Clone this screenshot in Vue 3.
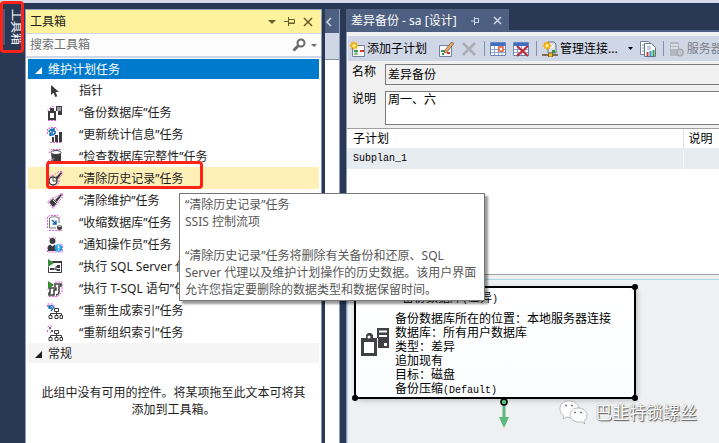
<script setup>
import { ref } from 'vue'

const dark = '#3b3b3f'
const halo = 'fill="none" stroke="#e45be0" stroke-width="1" stroke-dasharray="2 1"'
const tree = `<path d="M7.500 5.500h4v3h-4zM9.500 8.500v4M3.500 12.500v-2h11v2M2 12.500h3v3H2zM8 12.500h3v3H8zM13 12.500h2.500v3H13z" fill="none" stroke="${dark}"/>`

const tasks = [
  { label: '指针', icon: `<path d="M4 2v10l2.500-2.300L8.300 14l2-.8-1.800-4.100H12z" fill="${dark}"/>` },
  { label: '“备份数据库”任务', icon: `<path d="M.5 6 4 2l4-1M1 15.500h9" ${halo}/><path d="M9 1h6v9h-4V6H9z" fill="${dark}"/><path d="M10 3h4M10 5h4" stroke="#fff"/><path d="M2 7h6v7H2zM4 6.500V4h2v2.500" fill="#fff" stroke="${dark}" stroke-width="2"/>` },
  { label: '“更新统计信息”任务', icon: `<path d="M.5 7V2L4 .5h5L11 4M3 15.500h12" ${halo}/><path d="M2 5a3 3 0 0 1 5-2M8 4a3 3 0 0 1-5 3M7 1v3H4M3 9V6h3" fill="none" stroke="#1269b5" stroke-width="1.500"/><path d="M5 10h2v5H5zM8 8h3v7H8zM12 5h3v10h-3z" fill="${dark}"/>` },
  { label: '“检查数据库完整性”任务', icon: `<path d="M2 4 4 .5h11M.5 13 3 10" ${halo}/><ellipse cx="9" cy="3.500" rx="5" ry="2" fill="#fff" stroke="${dark}"/><path d="M4 4c2 2 8 2 10 0v9c-2 2-7 2-9 0z" fill="${dark}"/><path d="m1 12 2 2 4-5" fill="none" stroke="#777" stroke-width="2"/>` },
  { label: '“清除历史记录”任务', active: true, icon: `<path d="M.5 8 3 5l4-1 5-3.500h3V4l-3 3v5l-4 3.500H3L.500 12z" ${halo}/><path d="m8 7 6-6 1 1-5 7z" fill="${dark}"/><circle cx="6" cy="10" r="4" fill="#fff" stroke="${dark}" stroke-width="1.500"/><path d="M6 7v3h3" fill="none" stroke="${dark}"/>` },
  { label: '“清除维护”任务', icon: `<path d="M.5 9 5 5l4-1 5-3.500h1.500V4l-4 5L6 15.500z" ${halo}/><path d="m8 7 6-6 1 1-5 7z" fill="${dark}"/><path d="m2 9 4-3.500 4.500 4.500L6 14z" fill="${dark}"/><path d="M6 7l4 4" stroke="#fff"/>` },
  { label: '“收缩数据库”任务', icon: `<path d="M.5 13V2L3 .5h8L13.500 3M2 15.500h13" ${halo}/><path d="M2.500 3v10H9M2.500 3c1-1.500 8-1.500 9.500 0v5" fill="none" stroke="#777"/><path d="m5 5 4 4M9 5.500V9H5.500" fill="none" stroke="#1269b5" stroke-width="1.500"/><ellipse cx="12.500" cy="12.500" rx="2.500" ry="2.500" fill="${dark}"/><ellipse cx="12.500" cy="11.200" rx="1.500" ry=".6" fill="#fff"/>` },
  { label: '“通知操作员”任务', icon: `<path d="M2 1h7M.5 10v5h15V8l-3-2" ${halo}/><circle cx="5.500" cy="4" r="3" fill="${dark}"/><path d="M1 14V9l2-1.500 2.500 2L8 7.500 10 14z" fill="${dark}"/><circle cx="11.500" cy="11" r="3.800" fill="#28a4e8"/><path d="M11.500 8.500v3M11.500 12.500v1" stroke="#fff" stroke-width="1.500"/>` },
  { label: '“执行 SQL Server 代理作业”任务', icon: `<path d="M5.500 2.500h9v11h-13V8" fill="none" stroke="${dark}"/><path d="M5 3h10" stroke="${dark}" stroke-width="2"/><path d="m1 0 6 4-6 4z" fill="#388a34"/><path d="M3 9h4v2H3zM10 6h3v3h-3zM10 10h3v2h-3z" fill="${dark}"/><path d="M7 10h2V7.500h1M9 10v1h1" fill="none" stroke="${dark}"/>` },
  { label: '“执行 T-SQL 语句”任务', icon: `<path d="M.5 9 3 6M8 1h7v10l-4 4.500H2" ${halo}/><path d="M7 3h7v2h-2v6c0 2-2 3-3 3M8 4v2" fill="none" stroke="${dark}" stroke-width="1.500"/><path d="M3 7h6v2H7v5H2v-2h1z" fill="#fff" stroke="${dark}" stroke-width="1.500"/><path d="m1 0 6 4-6 4z" fill="#388a34"/>` },
  { label: '“重新生成索引”任务', icon: `${tree}<path d="M.5 4V1h5l2 2v2" ${halo}/><path d="M2 2v3h3M2.500 4.500C4 1 7.500 3 6 5.500L4 8" fill="none" stroke="#1269b5" stroke-width="1.300"/>` },
  { label: '“重新组织索引”任务', icon: `${tree}<path d="M.5 2 3 .5l2 1M.5 5v3M3 8l3-3M2 4l3-1" ${halo}/><path d="M2 2h2v2H2zM4 5h2v2H4z" fill="#666"/>` },
]

const star = '<path d="m5 0 1 2 2-1-.5 2.300L10 5l-2.300.7L8 8 6 7 5 10 4 7 2 8l.5-2.300L0 5l2.300-1.500L2 1l2 1z" fill="#f5a800"/><circle cx="5" cy="4.800" r="1.700" fill="#fff79a"/>'
const grid = '<path d="M.5 1.500h15v13H.5z" fill="#fff" stroke="#6a86b8"/><path d="M1 2h14v3H1z" fill="#3e6fc4"/><path d="M1 8.500h14M1 11.500h14M4.500 5v9M8.500 5v9M12 5v9" stroke="#8ba4cf"/>'
const icons = {
  add: `<path d="M3.500 4.500h12v11h-12z" fill="#f8f8fb" stroke="#7080a0"/><path d="M5 9h4v2H5z" fill="#35984a"/><path d="M5 13h4M7 10v3" stroke="#35984a"/><path d="M11 9h4v2h-4z" fill="#d53a32"/>${star}`,
  edit: '<path d="M1.500 4.500h12v11h-12z" fill="#f8f8fb" stroke="#7080a0"/><path d="M3 9h4v2H3zM4 12h2v2H4z" fill="#35984a"/><path d="M9 11h3v2H9z" fill="#d53a32"/><path d="m7 9 6.500-8L16 2.500 9 11l-3 1z" fill="#e3a768" stroke="#725132" stroke-width=".7"/>',
  remove: '<path d="m2 2 12 12M14 2 2 14" stroke="#a9adb5" stroke-width="2.500"/>',
  schedule: `${grid}<path d="M9 6h4v4H9z" fill="#fff" stroke="#ed5b2b" stroke-width="1.500"/>`,
  unschedule: `${grid}<path d="m4 5 11 10M15 5 4 15" stroke="#c42832" stroke-width="2"/>`,
  connect: `<path d="M6 1h6l2 2v9H6z" fill="#d9dee3" stroke="#6d7783"/><path d="M8 4h4M8 6h4" stroke="#fff"/><path d="M10 9h3v3h-3z" fill="#2e9a45"/><path d="M0 14h16" stroke="#5b4a22" stroke-width="1.500"/><path d="M6.500 12h4v4h-4z" fill="#f4bd28" stroke="#6f5615" stroke-width=".7"/>${star}`,
  report: '<path d="M.5.5h8l2 2v11H.5z" fill="#fff" stroke="#7080a0"/><path d="M4.500 2.500h7l4 4v9h-11z" fill="#fff" stroke="#60718f"/><path d="M2 4h2M2 7h2M2 10h2M7 6h4M7 8h4" stroke="#7f9fca"/><path d="M6.500 11h2v4h-2z" fill="#d53a32"/><path d="M9.500 10h2v5h-2z" fill="#318ed8"/><path d="M12.500 9h2v6h-2z" fill="#35984a"/>',
  server: '<path d="M1 1h9v14H1z" fill="#b3b7bf"/><path d="M2 4h7M2 7h7" stroke="#e4e8ef" stroke-width="1.500"/><circle cx="11" cy="11.500" r="4" fill="#a7abb2"/><circle cx="11" cy="11.500" r="1.500" fill="none" stroke="#e4e8ef"/>',
}

const planName = ref('差异备份')
const planNote = ref('周一、六')
const query = ref('')
</script>

<template>
  <div class="shell">
    <nav class="rail">
      <button class="rail-tab" type="button">工具箱</button>
      <span class="mark mark-rail"></span>
    </nav>

    <aside class="toolbox">
      <header class="tool-title">
        <h2>工具箱</h2>
        <button type="button" aria-label="窗口位置"><svg width="8" height="4"><path d="M0 0h8L4 4z" fill="#6b5a2a" /></svg></button>
        <button type="button" aria-label="自动隐藏"><svg width="11" height="9"><path d="M0 4.500h4M4.500 0v9M5 2.500h5.500v4H5M5 6h5" fill="none" stroke="#6b5a2a" /></svg></button>
        <button type="button" aria-label="关闭"><svg width="10" height="10"><path d="m1 1 8 8M9 1 1 9" stroke="#6b5a2a" stroke-width="1.500" /></svg></button>
      </header>
      <div class="search">
        <input v-model="query" type="text" aria-label="搜索工具箱" placeholder="搜索工具箱">
        <button type="button" aria-label="搜索"><svg width="14" height="14"><circle cx="9" cy="5" r="3.500" fill="none" stroke="#6a6a6a" stroke-width="2" /><path d="m6.500 7.500-5 5" stroke="#6a6a6a" stroke-width="3" /></svg></button>
        <button type="button" aria-label="搜索选项"><svg width="6" height="3"><path d="M0 0h6L3 3z" fill="#6a6a6a" /></svg></button>
      </div>
      <div class="groups">
        <button class="group selected" type="button"><svg width="7" height="7"><path d="M7 0v7H0z" fill="currentColor" /></svg>维护计划任务</button>
        <ul>
          <li v-for="task in tasks" :key="task.label">
            <button class="task" :class="{ active: task.active }" type="button">
              <svg width="16" height="16" viewBox="0 0 16 16" v-html="task.icon"></svg>{{ task.label }}
            </button>
            <span v-if="task.active" class="mark mark-task"></span>
          </li>
        </ul>
        <button class="group" type="button"><svg width="7" height="7"><path d="M7 0v7H0z" fill="currentColor" /></svg>常规</button>
        <p class="empty">此组中没有可用的控件。将某项拖至此文本可将其添加到工具箱。</p>
      </div>
    </aside>

    <div class="behind">
      <div class="behind-tab"><svg width="7" height="10"><path d="M6 1 2 5l4 4" fill="none" stroke="#ccd5e6" stroke-width="1.500" /></svg></div>
      <div class="behind-bar"></div>
      <div class="behind-page"></div>
    </div>

    <main class="document">
      <div class="tabs">
        <div class="tab">
          <span>差异备份 - sa [设计]</span>
          <button type="button" aria-label="固定"><svg width="8" height="8"><path d="M0 4h3M3.500 0v8M4 1.500h3.500v4H4" fill="none" stroke="#ccd5e6" /></svg></button>
          <button type="button" aria-label="关闭标签页"><svg width="9" height="9"><path d="m1 1 7 7M8 1 1 8" stroke="#ccd5e6" stroke-width="1.500" /></svg></button>
        </div>
      </div>
      <div class="editor">
        <div class="toolbar">
          <button type="button"><svg width="16" height="16" v-html="icons.add"></svg>添加子计划</button>
          <button class="spaced" type="button" aria-label="编辑子计划"><svg width="16" height="16" v-html="icons.edit"></svg></button>
          <button type="button" aria-label="删除子计划" disabled><svg width="16" height="16" v-html="icons.remove"></svg></button>
          <i class="sep"></i>
          <button type="button" aria-label="计划"><svg width="16" height="16" v-html="icons.schedule"></svg></button>
          <button type="button" aria-label="删除计划"><svg width="16" height="16" v-html="icons.unschedule"></svg></button>
          <i class="sep"></i>
          <button type="button"><svg width="16" height="16" v-html="icons.connect"></svg>管理连接...<svg class="caret" width="5" height="3"><path d="M0 0h5L2.500 3z" /></svg></button>
          <button type="button" aria-label="报告和日志记录"><svg width="16" height="16" v-html="icons.report"></svg></button>
          <i class="sep"></i>
          <button type="button" disabled><svg width="16" height="16" v-html="icons.server"></svg>服务器</button>
        </div>
        <form class="fields" @submit.prevent>
          <label for="plan-name">名称</label>
          <input id="plan-name" v-model="planName" type="text" readonly>
          <label for="plan-note">说明</label>
          <textarea id="plan-note" v-model="planNote"></textarea>
        </form>
        <div class="subplans">
          <table>
            <thead><tr><th>子计划</th><th class="note">说明</th></tr></thead>
            <tbody><tr><td><span class="mono">Subplan_1</span></td><td></td></tr></tbody>
          </table>
        </div>
        <div class="canvas">
          <article class="node">
            <i class="dot tl"></i><i class="dot tr"></i><i class="dot bl"></i><i class="dot br"></i>
            <h3>备份数据库<span class="mono">(</span>差异<span class="mono">)</span></h3>
            <div class="node-body">
              <svg width="28" height="28" viewBox="0 0 28 28"><path d="M16 0h12v20H17V10h-1z" fill="#414143" /><path d="M18 3.500h8M18 8h8" stroke="#fff" stroke-width="2" /><path d="M23 15h3v3h-3z" fill="#fff" /><path d="M0 10h5V7l2-2h3l2 2v3h4v18H0z" fill="#414143" /><path d="M3 14h10v11H3z" fill="#fff" /><circle cx="8" cy="9" r="1.500" fill="#fff" /></svg>
              <p>备份数据库所在的位置：本地服务器连接<br>数据库：所有用户数据库<br>类型：差异<br>追加现有<br>目标：磁盘<br>备份压缩<span class="mono">(Default)</span></p>
            </div>
          </article>
          <svg class="flow-arrow" width="12" height="32"><path d="M6 6v18" stroke="#5dba80" stroke-width="3" /><path d="M1 20h10L6 31z" fill="#5dba80" /><circle cx="6" cy="5" r="3" fill="#5dba80" stroke="#000" stroke-width="1.500" /></svg>
          <div class="watermark">
            <svg width="29" height="26" viewBox="0 0 29 26"><g fill="#fff" stroke="#a9abad" stroke-width=".8"><path d="M10 1C4 1 1 5 1 9c0 3 1 5 4 7l-1 3 4-2c9 2 12-3 12-8 0-4-4-8-10-8z" /><path d="M19 8c-5 0-8 3-8 7s4 7 9 7l3 0 3 2-1-3c2-1 3-4 3-6 0-4-4-7-9-7z" /></g><path d="M6 5.500h2M12 5.500h2M15 12.500h2M21 12.500h2" stroke="#777" stroke-width="1.500" /></svg>
            <span>巴韭特锁螺丝</span>
          </div>
        </div>
      </div>
    </main>

    <div class="tooltip" role="tooltip">
      <p>“清除历史记录”任务<br>SSIS 控制流项</p>
      <p>“清除历史记录”任务将删除有关备份和还原、SQL Server 代理以及维护计划操作的历史数据。该用户界面允许您指定要删除的数据类型和数据保留时间。</p>
    </div>
  </div>
</template>

<style>
body {
  margin: 0;
}
</style>

<style scoped>
* {
  box-sizing: border-box;
}

.shell {
  position: relative;
  display: flex;
  min-height: 100vh;
  padding-top: 9px;
  overflow: hidden;
  background: linear-gradient(#d6dbe9 3px, #293955 3px);
  color: #1e1e1e;
  font: 12px/16px "Noto Sans", "Noto Sans CJK SC", sans-serif;
}

button,
input,
textarea {
  margin: 0;
  padding: 0;
  border: 0;
  border-radius: 0;
  background: none;
  color: inherit;
  font: inherit;
}

button {
  display: flex;
  flex: none;
  align-items: center;
  white-space: nowrap;
}

svg {
  display: block;
  flex: none;
}

h2,
h3,
p,
ul {
  margin: 0;
  padding: 0;
  font-size: 12px;
  font-weight: 400;
  list-style: none;
}

.rail {
  flex: none;
  width: 25px;
  padding-left: 2px;
}

.rail-tab {
  height: 36px;
  padding-left: 4px;
  border-left: 3px solid #465a7d;
  color: #fff;
  line-height: 14px;
  writing-mode: vertical-rl;
  text-orientation: sideways;
}

.mark {
  position: absolute;
  z-index: 3;
  border: 3px solid #fd2417;
  border-radius: 4px;
  pointer-events: none;
}

.mark-rail {
  top: 1px;
  left: 0;
  width: 24px;
  height: 52px;
}

.toolbox {
  display: flex;
  flex: none;
  flex-direction: column;
  width: 297px;
  border: 1px solid #8e9bbc;
  border-bottom: 0;
  background: #fff;
}

.tool-title {
  display: flex;
  align-items: center;
  gap: 8px;
  height: 23px;
  padding: 0 8px 0 4px;
  background: #fff29d;
}

.tool-title h2 {
  flex: 1;
}

.search {
  display: flex;
  align-items: center;
  gap: 5px;
  height: 25px;
  padding: 0 4px;
  border-top: 1px solid #cfd6e5;
  border-bottom: 2px solid #cfd6e5;
  background: #fcfcfc;
}

.search input {
  flex: 1;
  min-width: 0;
  outline: 0;
}

.search input::placeholder {
  color: #717171;
  opacity: 1;
}

.groups {
  padding: 1px 2px;
}

.group {
  gap: 6px;
  width: 100%;
  height: 20px;
  padding: 2px 0 0 7px;
  background: #f5f5f5;
}

.group.selected {
  background: #007acc;
  color: #fff;
}

li {
  position: relative;
}

.task {
  gap: 16px;
  width: 100%;
  height: 22px;
  padding: 2px 0 0 19px;
}

.task.active {
  background: #fff0b8;
}

.mark-task {
  top: -6px;
  left: 18px;
  width: 157px;
  height: 28px;
}

.empty {
  padding: 21px 8px;
  line-height: 17px;
  text-align: center;
}

.behind {
  display: flex;
  flex: none;
  flex-direction: column;
  width: 18px;
  margin-right: 6px;
  border-left: 3px solid #293955;
  border-right: 1px solid #8e9bbc;
}

.behind-tab {
  height: 24px;
  padding-top: 8px;
  background: #4d6082;
}

.behind-bar {
  height: 27px;
  border-bottom: 1px solid #8a8f99;
  background: #cfd6e5;
}

.behind-page {
  flex: 1;
  background: #fff;
}

.document {
  display: flex;
  flex: 1;
  flex-direction: column;
  min-width: 0;
}

.tabs {
  display: flex;
  border-bottom: 2px solid #4d6082;
}

.tab {
  display: flex;
  align-items: center;
  gap: 14px;
  height: 21px;
  padding: 2px 7px 0 5px;
  background: #4d6082;
  color: #fff;
}

.editor {
  display: flex;
  flex: 1;
  flex-direction: column;
  padding-top: 4px;
  border-left: 1px solid #8e9bbc;
  background: #f0f0f0;
}

.toolbar {
  display: flex;
  align-items: center;
  gap: 7px;
  height: 25px;
  margin-left: 1px;
  padding-left: 1px;
  overflow: hidden;
  background: #cfd6e5;
  color: #000;
}

.toolbar button {
  gap: 2px;
}

.toolbar .spaced {
  margin-left: 4px;
}

.toolbar .caret {
  margin-left: 8px;
}

.toolbar button:disabled {
  color: #7d8088;
}

.sep {
  flex: none;
  width: 1px;
  height: 15px;
  margin-right: -2px;
  background: #8591a8;
}

.fields {
  display: grid;
  grid-template-columns: 33px 1fr;
  gap: 6px 0;
  padding: 3px 0 3px 5px;
  color: #000;
}

.fields input,
.fields textarea {
  width: 100%;
  height: 21px;
  padding: 0 2px 2px;
  border: 1px solid #7a7a7a;
  border-right: 0;
  outline: 0;
  background: #f0f0f0;
}

.fields textarea {
  display: block;
  height: 34px;
  background: #fff;
  resize: none;
}

.subplans {
  height: 147px;
  border: 1px solid #a0a0a0;
  border-width: 1px 0;
  background: #fff;
  color: #000;
}

table {
  width: 100%;
  border-collapse: collapse;
  table-layout: fixed;
}

th,
td {
  height: 19px;
  padding: 0 0 0 6px;
  font-weight: 400;
  text-align: left;
}

td {
  height: 21px;
  padding-bottom: 3px;
  background: #e7ecf0;
}

.note {
  width: 36px;
  padding-left: 5px;
  border-left: 1px solid #e0e0e0;
}

td + td {
  border-left: 1px solid #f5f5f5;
}

.mono {
  font-family: "Liberation Mono", monospace;
  font-size: 10px;
  line-height: 0;
}

.canvas {
  position: relative;
  flex: 1;
  min-height: 165px;
  margin-top: 4px;
  border-top: 1px solid #add8e6;
  border-left: 1px solid #add8e6;
  background: #eff0f2;
}

.node {
  position: absolute;
  top: 6px;
  left: 6px;
  width: 282px;
  height: 113px;
  padding-top: 3px;
  border: 2px solid #000;
  border-radius: 5px;
  background: linear-gradient(#fff, #fbfdff);
  box-shadow: 2px 2px 5px #c4c5c8;
  color: #000;
}

.node h3 {
  padding-left: 46px;
  line-height: 14px;
}

.node-body {
  display: flex;
  align-items: flex-start;
  gap: 6px;
  padding: 7px 0 0 5px;
}

.node-body p {
  line-height: 14px;
}

.node-body svg {
  margin-top: 16px;
}

.dot {
  position: absolute;
  width: 6px;
  height: 6px;
  border-radius: 50%;
  background: #000;
}

.tl { top: -4px; left: -4px; }
.tr { top: -4px; right: -4px; }
.bl { bottom: -4px; left: -4px; }
.br { bottom: -4px; right: -4px; }

.flow-arrow {
  position: absolute;
  top: 117px;
  left: 150px;
}

.watermark {
  position: absolute;
  right: 22px;
  bottom: 18px;
  display: flex;
  align-items: center;
  gap: 7px;
  color: #fff;
  font-size: 17px;
  line-height: 26px;
  text-shadow: 1px 1px 1px #555, 0 0 1px #777;
}

.tooltip {
  position: absolute;
  z-index: 2;
  top: 193px;
  left: 179px;
  display: grid;
  gap: 17px;
  width: 306px;
  padding: 2px 5px;
  border: 1px solid #767676;
  background: #fff;
  box-shadow: 3px 3px 2px #0006;
  color: #575757;
  line-height: 17px;
}
</style>
